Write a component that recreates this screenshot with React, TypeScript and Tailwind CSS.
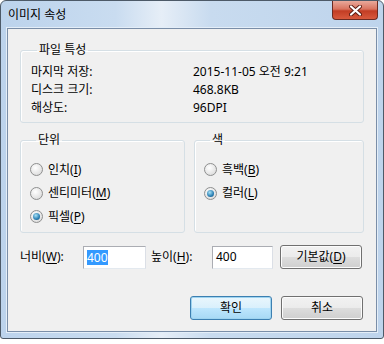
import React from 'react';

const font = "font-['Noto_Sans','Noto_Sans_CJK_KR',sans-serif]";

function Mn({ label, k }: { label: string; k: string }) {
  return (
    <span>
      {label}(<span className="underline underline-offset-2">{k}</span>)
    </span>
  );
}

function Radio({ checked, children }: { checked?: boolean; children: React.ReactNode }) {
  return (
    <div className="flex items-center gap-[5px] h-[23.5px]">
      <div className="w-[13px] h-[13px] rounded-full border border-[#8e8f8f] bg-[radial-gradient(circle_at_40%_35%,#ffffff,#d4d4d4)] flex items-center justify-center">
        {checked && (
          <div className="w-[7px] h-[7px] rounded-full bg-[radial-gradient(circle_at_40%_35%,#a9e2f6,#2a7fb3_60%,#14496e)]" />
        )}
      </div>
      <span>{children}</span>
    </div>
  );
}

function Group({ title, className, children }: { title: string; className?: string; children: React.ReactNode }) {
  return (
    <fieldset className={`border border-[#d5dfe5] rounded-[3px] shadow-[inset_1px_1px_0_#ffffff] ${className ?? ''}`}>
      <legend className="ml-[6px] px-[2px] leading-[14px]">{title}</legend>
      {children}
    </fieldset>
  );
}

function Button({ children, primary }: { children: React.ReactNode; primary?: boolean }) {
  return (
    <div
      className={
        'w-[82px] h-[24px] rounded-[3px] flex items-center justify-center border ' +
        (primary
          ? 'border-[#3c7fb1] bg-[linear-gradient(#eaf6fd_0%,#d9f0fc_50%,#bee6fd_51%,#a7d9f5_100%)] shadow-[inset_0_0_0_1px_#9fd4f0]'
          : 'border-[#707070] bg-[linear-gradient(#f2f2f2_0%,#ebebeb_50%,#dddddd_51%,#cfcfcf_100%)] shadow-[inset_0_0_0_1px_#fcfcfc]')
      }
    >
      {children}
    </div>
  );
}

export default function App() {
  return (
    <div className={`w-[384px] h-[344px] bg-white text-[12px] text-black ${font}`}>
      <div className="w-[384px] h-[339px] rounded-t-[6px] rounded-b-[3px] border border-[#4d5a68] bg-[linear-gradient(90deg,#bcd3ec_0%,#c9dcf0_30%,#e6eef7_42%,#c8dbef_55%,#bed4ec_100%)] flex flex-col relative">
        <div className="h-[27px] flex items-center pl-[7px] text-[12px]">이미지 속성</div>
        <div className="absolute top-0 right-[5px] w-[46px] h-[19px] rounded-b-[4px] border border-t-0 border-[#6b2b22] bg-[linear-gradient(#e9a99b_0%,#d9735f_45%,#c23d24_55%,#d8593d_100%)] flex items-center justify-center">
          <svg width="13" height="11" viewBox="0 0 13 11">
            <path d="M2 1.5 L11 9.5 M11 1.5 L2 9.5" stroke="#5a1a10" strokeWidth="4" strokeLinecap="round" />
            <path d="M2 1.5 L11 9.5 M11 1.5 L2 9.5" stroke="#ffffff" strokeWidth="2.2" strokeLinecap="round" />
          </svg>
        </div>
        <div className="mx-[6px] mb-[6px] flex-1 border border-[#7a8ea8] bg-[#f0f0f0] shadow-[0_0_0_1px_#e4eef8] px-[12px] pt-[14px] flex flex-col">
          <Group title="파일 특성" className="h-[80px] pl-[10px] pt-[6px]">
            {[
              ['마지막 저장:', '2015-11-05 오전 9:21'],
              ['디스크 크기:', '468.8KB'],
              ['해상도:', '96DPI'],
            ].map(([k, v]) => (
              <div key={k} className="flex items-center h-[18px]">
                <span className="w-[162px]">{k}</span>
                <span>{v}</span>
              </div>
            ))}
          </Group>
          <div className="flex gap-[9px] mt-[10px] h-[100px]">
            <Group title="단위" className="w-[165px] pl-[9px] pt-[11px]">
              <Radio><Mn label="인치" k="I" /></Radio>
              <Radio><Mn label="센티미터" k="M" /></Radio>
              <Radio checked><Mn label="픽셀" k="P" /></Radio>
            </Group>
            <Group title="색" className="flex-1 pl-[9px] pt-[11px]">
              <Radio><Mn label="흑백" k="B" /></Radio>
              <Radio checked><Mn label="컬러" k="L" /></Radio>
            </Group>
          </div>
          <div className="flex items-center mt-[12px] h-[24px]">
            <span className="w-[63px]"><Mn label="너비" k="W" />:</span>
            <div className="w-[63px] h-[23px] border border-[#abadb3] border-b-[#e3e9ef] border-r-[#dbdfe6] bg-white flex items-center pl-[3px]">
              <span className="bg-[#3399ff] text-white leading-[15px]">400</span>
            </div>
            <span className="ml-[5px] w-[61px]"><Mn label="높이" k="H" />:</span>
            <div className="w-[61px] h-[23px] border border-[#abadb3] border-b-[#e3e9ef] border-r-[#dbdfe6] bg-white flex items-center pl-[3px]">
              400
            </div>
            <div className="ml-[7px]">
              <Button><Mn label="기본값" k="D" /></Button>
            </div>
          </div>
          <div className="flex justify-end gap-[9px] mt-[27px] pr-[1px]">
            <Button primary>확인</Button>
            <Button>취소</Button>
          </div>
        </div>
      </div>
    </div>
  );
}
